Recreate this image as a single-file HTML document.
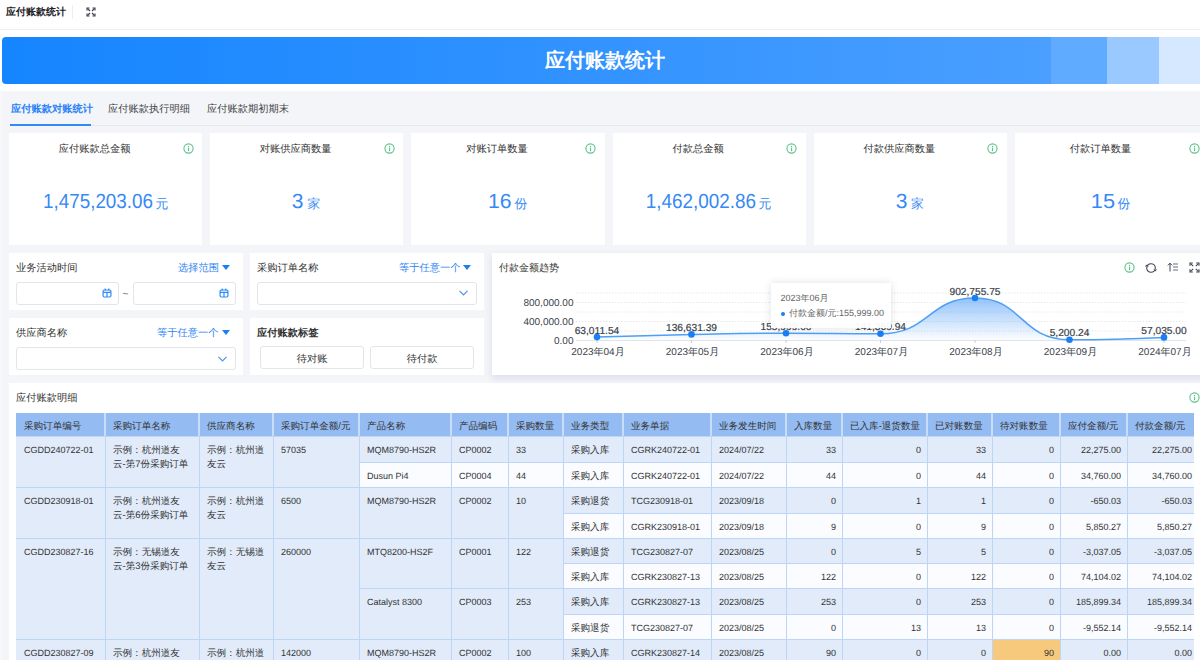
<!DOCTYPE html><html><head><meta charset="utf-8"><style>
*{box-sizing:border-box;margin:0;padding:0}
html,body{width:1200px;height:660px;overflow:hidden;background:#f3f5f9;font-family:"Liberation Sans", sans-serif;color:#333;text-rendering:geometricPrecision}
.a{position:absolute}
.t{position:absolute;white-space:nowrap;line-height:1}
.card{position:absolute;background:#fff}
.info{position:absolute;width:11px;height:11px}
.info svg{display:block}
.inp{position:absolute;background:#fff;border:1px solid #e3e5ea;border-radius:3px}
.btn{position:absolute;background:#fff;border:1px solid #e3e5ea;border-radius:3px;font-size:10.25px;color:#333;text-align:center;line-height:21px}
.cell{position:absolute;font-size:9.55px;color:#333;white-space:nowrap;overflow:hidden}
.lt{font-size:9px}
</style></head><body>
<div class="a" style="left:0;top:0;width:1200px;height:30px;background:#fff;border-bottom:1px solid #eceef2"></div>
<div class="t" style="margin-top:1.2px;left:6px;top:6.5px;font-size:10px;font-weight:bold;color:#1f2329">应付账款统计</div>
<div class="a" style="left:72px;top:4.5px;width:1px;height:14px;background:#eceef2"></div>
<svg class="a" style="left:85.5px;top:6.5px" width="10" height="10" viewBox="0 0 10 10" fill="none" stroke="#3a3f4a" stroke-width="1.1">
<path d="M1 3.5V1H3.5M6.5 1H9V3.5M9 6.5V9H6.5M3.5 9H1V6.5"/><path d="M1.5 1.5L4 4M8.5 1.5L6 4M8.5 8.5L6 6M1.5 8.5L4 6"/></svg>
<div class="a" style="left:0;top:30px;width:1200px;height:61px;background:#fff"></div>
<div class="a" style="left:2px;top:37px;width:1210px;height:47px;border-radius:4px;overflow:hidden;background:linear-gradient(90deg,#1585ff 0%,#3393ff 50%,#4a9fff 87%)"><div class="a" style="left:1049px;top:0;width:56px;height:47px;background:#5fabff"></div><div class="a" style="left:1105px;top:0;width:52px;height:47px;background:#99c9ff"></div><div class="a" style="left:1157px;top:0;width:60px;height:47px;background:#d6e8ff"></div></div>
<div class="t" style="margin-top:1.2px;left:545px;top:50px;font-size:20px;font-weight:bold;color:#fff;letter-spacing:0px">应付账款统计</div>
<div class="a" style="left:10px;top:125px;width:1190px;height:1px;background:#e4e7ed"></div><div class="a" style="left:0;top:91px;width:2px;height:569px;background:#f8f8fb"></div>
<div class="a" style="left:10px;top:124px;width:81px;height:2px;background:#3389f5"></div>
<div class="t" style="margin-top:1.2px;left:11px;top:104px;font-size:10.25px;color:#2b83f6;font-weight:bold">应付账款对账统计</div>
<div class="t" style="margin-top:1.2px;left:108px;top:104px;font-size:10.25px;color:#444">应付账款执行明细</div>
<div class="t" style="margin-top:1.2px;left:207px;top:104px;font-size:10.25px;color:#444">应付账款期初期末</div>
<div class="card" style="left:9.0px;top:133px;width:193.3px;height:112px"><div class="t" style="margin-top:1.2px;left:0;width:171px;top:10.5px;text-align:center;font-size:10.25px;color:#333">应付账款总金额</div><div class="info" style="left:173.5px;top:9.5px"><svg width="11" height="11" viewBox="0 0 11 11"><circle cx="5.5" cy="5.5" r="4.6" fill="none" stroke="#5cc489" stroke-width="1.1"/><rect x="5" y="2.9" width="1.1" height="1.1" fill="#5cc489"/><rect x="5" y="4.6" width="1.1" height="3.6" fill="#5cc489"/></svg></div></div>
<svg class="a" style="left:0;top:180px" width="1200" height="40"><text x="43" y="28" font-size="20.5" fill="#3589f5" textLength="110" lengthAdjust="spacingAndGlyphs" font-family="Liberation Sans">1,475,203.06</text><text x="155.5" y="27.6" font-size="12.8" fill="#3589f5">元</text></svg>
<div class="card" style="left:210.2px;top:133px;width:193.3px;height:112px"><div class="t" style="margin-top:1.2px;left:0;width:171px;top:10.5px;text-align:center;font-size:10.25px;color:#333">对账供应商数量</div><div class="info" style="left:173.5px;top:9.5px"><svg width="11" height="11" viewBox="0 0 11 11"><circle cx="5.5" cy="5.5" r="4.6" fill="none" stroke="#5cc489" stroke-width="1.1"/><rect x="5" y="2.9" width="1.1" height="1.1" fill="#5cc489"/><rect x="5" y="4.6" width="1.1" height="3.6" fill="#5cc489"/></svg></div></div>
<svg class="a" style="left:0;top:180px" width="1200" height="40"><text x="291.8" y="28" font-size="20.5" fill="#3589f5" textLength="11.699999999999989" lengthAdjust="spacingAndGlyphs" font-family="Liberation Sans">3</text><text x="307.5" y="27.6" font-size="12.8" fill="#3589f5">家</text></svg>
<div class="card" style="left:411.4px;top:133px;width:193.3px;height:112px"><div class="t" style="margin-top:1.2px;left:0;width:171px;top:10.5px;text-align:center;font-size:10.25px;color:#333">对账订单数量</div><div class="info" style="left:173.5px;top:9.5px"><svg width="11" height="11" viewBox="0 0 11 11"><circle cx="5.5" cy="5.5" r="4.6" fill="none" stroke="#5cc489" stroke-width="1.1"/><rect x="5" y="2.9" width="1.1" height="1.1" fill="#5cc489"/><rect x="5" y="4.6" width="1.1" height="3.6" fill="#5cc489"/></svg></div></div>
<svg class="a" style="left:0;top:180px" width="1200" height="40"><text x="488" y="28" font-size="20.5" fill="#3589f5" textLength="23.5" lengthAdjust="spacingAndGlyphs" font-family="Liberation Sans">16</text><text x="514.5" y="27.6" font-size="12.8" fill="#3589f5">份</text></svg>
<div class="card" style="left:612.5999999999999px;top:133px;width:193.3px;height:112px"><div class="t" style="margin-top:1.2px;left:0;width:171px;top:10.5px;text-align:center;font-size:10.25px;color:#333">付款总金额</div><div class="info" style="left:173.5px;top:9.5px"><svg width="11" height="11" viewBox="0 0 11 11"><circle cx="5.5" cy="5.5" r="4.6" fill="none" stroke="#5cc489" stroke-width="1.1"/><rect x="5" y="2.9" width="1.1" height="1.1" fill="#5cc489"/><rect x="5" y="4.6" width="1.1" height="3.6" fill="#5cc489"/></svg></div></div>
<svg class="a" style="left:0;top:180px" width="1200" height="40"><text x="645.8" y="28" font-size="20.5" fill="#3589f5" textLength="110.20000000000005" lengthAdjust="spacingAndGlyphs" font-family="Liberation Sans">1,462,002.86</text><text x="758.5" y="27.6" font-size="12.8" fill="#3589f5">元</text></svg>
<div class="card" style="left:813.8px;top:133px;width:193.3px;height:112px"><div class="t" style="margin-top:1.2px;left:0;width:171px;top:10.5px;text-align:center;font-size:10.25px;color:#333">付款供应商数量</div><div class="info" style="left:173.5px;top:9.5px"><svg width="11" height="11" viewBox="0 0 11 11"><circle cx="5.5" cy="5.5" r="4.6" fill="none" stroke="#5cc489" stroke-width="1.1"/><rect x="5" y="2.9" width="1.1" height="1.1" fill="#5cc489"/><rect x="5" y="4.6" width="1.1" height="3.6" fill="#5cc489"/></svg></div></div>
<svg class="a" style="left:0;top:180px" width="1200" height="40"><text x="895.8" y="28" font-size="20.5" fill="#3589f5" textLength="11.700000000000045" lengthAdjust="spacingAndGlyphs" font-family="Liberation Sans">3</text><text x="911" y="27.6" font-size="12.8" fill="#3589f5">家</text></svg>
<div class="card" style="left:1015.0px;top:133px;width:193.3px;height:112px"><div class="t" style="margin-top:1.2px;left:0;width:171px;top:10.5px;text-align:center;font-size:10.25px;color:#333">付款订单数量</div><div class="info" style="left:173.5px;top:9.5px"><svg width="11" height="11" viewBox="0 0 11 11"><circle cx="5.5" cy="5.5" r="4.6" fill="none" stroke="#5cc489" stroke-width="1.1"/><rect x="5" y="2.9" width="1.1" height="1.1" fill="#5cc489"/><rect x="5" y="4.6" width="1.1" height="3.6" fill="#5cc489"/></svg></div></div>
<svg class="a" style="left:0;top:180px" width="1200" height="40"><text x="1090.8" y="28" font-size="20.5" fill="#3589f5" textLength="24.200000000000045" lengthAdjust="spacingAndGlyphs" font-family="Liberation Sans">15</text><text x="1117.5" y="27.6" font-size="12.8" fill="#3589f5">份</text></svg>
<div class="card" style="left:9px;top:383px;width:1200px;height:300px"></div>
<div class="card" style="left:9px;top:253px;width:234px;height:57px;"></div>
<div class="card" style="left:9px;top:318px;width:234px;height:57px;"></div>
<div class="card" style="left:250px;top:253px;width:234px;height:57px;"></div>
<div class="card" style="left:250px;top:318px;width:234px;height:57px;"></div>
<div class="t" style="margin-top:1.2px;left:16px;top:262.7px;font-size:10.25px;color:#333">业务活动时间</div>
<div class="t" style="margin-top:1.2px;left:178px;top:262.7px;font-size:10.25px;color:#2f83f3">选择范围</div><div class="a" style="left:222px;top:265px;width:0;height:0;border-left:4px solid transparent;border-right:4px solid transparent;border-top:5px solid #1b7ef5"></div>
<div class="inp" style="left:16px;top:282px;width:103px;height:23px"></div><svg class="a" style="left:102px;top:288.2px" width="10" height="10" viewBox="0 0 10 10" fill="none" stroke="#2f8bf5" stroke-width="1.2"><rect x="1.1" y="2" width="7.8" height="7" rx="1.2"/><path d="M1 4.3H9M5 4.3V9M3.2 0.6V2.6M6.8 0.6V2.6"/></svg>
<div class="t" style="left:122.5px;top:290px;font-size:10px;color:#555">~</div>
<div class="inp" style="left:133px;top:282px;width:103px;height:23px"></div><svg class="a" style="left:219px;top:288.2px" width="10" height="10" viewBox="0 0 10 10" fill="none" stroke="#2f8bf5" stroke-width="1.2"><rect x="1.1" y="2" width="7.8" height="7" rx="1.2"/><path d="M1 4.3H9M5 4.3V9M3.2 0.6V2.6M6.8 0.6V2.6"/></svg>
<div class="t" style="margin-top:1.2px;left:16px;top:327.7px;font-size:10.25px;color:#333">供应商名称</div>
<div class="t" style="margin-top:1.2px;left:157px;top:327.7px;font-size:10.25px;color:#2f83f3">等于任意一个</div><div class="a" style="left:222px;top:330px;width:0;height:0;border-left:4px solid transparent;border-right:4px solid transparent;border-top:5px solid #1b7ef5"></div>
<div class="inp" style="left:16px;top:347px;width:220px;height:23px"></div><svg class="a" style="left:218px;top:356px" width="9" height="6" viewBox="0 0 9 6"><path d="M0.5 0.8L4.5 4.8L8.5 0.8" fill="none" stroke="#4a93f3" stroke-width="1.2"/></svg>
<div class="t" style="margin-top:1.2px;left:257px;top:262.7px;font-size:10.25px;color:#333">采购订单名称</div>
<div class="t" style="margin-top:1.2px;left:399px;top:262.7px;font-size:10.25px;color:#2f83f3">等于任意一个</div><div class="a" style="left:463px;top:265px;width:0;height:0;border-left:4px solid transparent;border-right:4px solid transparent;border-top:5px solid #1b7ef5"></div>
<div class="inp" style="left:257px;top:282px;width:220px;height:23px"></div><svg class="a" style="left:459px;top:290px" width="9" height="6" viewBox="0 0 9 6"><path d="M0.5 0.8L4.5 4.8L8.5 0.8" fill="none" stroke="#4a93f3" stroke-width="1.2"/></svg>
<div class="t" style="margin-top:1.2px;left:257px;top:327.7px;font-size:10.25px;color:#333;font-weight:bold">应付账款标签</div>
<div class="btn" style="padding-top:1.5px;left:260px;top:346px;width:104px;height:23px">待对账</div>
<div class="btn" style="padding-top:1.5px;left:370px;top:346px;width:104px;height:23px">待付款</div>
<div class="card" style="left:492px;top:253px;width:720px;height:122px;box-shadow:0 3px 7px rgba(60,50,140,0.13)"></div>
<div class="t" style="margin-top:1.2px;left:499px;top:263px;font-size:10px;color:#333">付款金额趋势</div>
<div class="info" style="left:1123.5px;top:261.8px"><svg width="11" height="11" viewBox="0 0 11 11"><circle cx="5.5" cy="5.5" r="4.6" fill="none" stroke="#5cc489" stroke-width="1.1"/><rect x="5" y="2.9" width="1.1" height="1.1" fill="#5cc489"/><rect x="5" y="4.6" width="1.1" height="3.6" fill="#5cc489"/></svg></div>
<svg class="a" style="left:1144.5px;top:261.5px" width="12" height="12" viewBox="0 0 12 12" fill="none" stroke="#3d4350" stroke-width="1.1"><circle cx="6" cy="6" r="4.3"/><path d="M0.6 4.6L1.7 2.9L3.0 4.6" stroke-width="1"/><path d="M9.0 7.4L10.3 9.1L11.4 7.4" stroke-width="1"/></svg>
<svg class="a" style="left:1166.5px;top:262px" width="12" height="10" viewBox="0 0 12 10" fill="none" stroke="#3d4350" stroke-width="1"><path d="M3 9.5V1.3M0.9 3.4L3 1.2L5.1 3.4"/><path d="M6 2H11M6 5H11M6 8H11" stroke="#6b7080" stroke-width="1.2"/></svg>
<svg class="a" style="left:1188.5px;top:261.5px" width="11" height="11" viewBox="0 0 11 11" fill="none" stroke="#3d4350" stroke-width="1.1"><path d="M1 3.8V1H3.8M7.2 1H10V3.8M10 7.2V10H7.2M3.8 10H1V7.2"/><path d="M1.6 1.6L4.2 4.2M9.4 1.6L6.8 4.2M9.4 9.4L6.8 6.8M1.6 9.4L4.2 6.8"/></svg>
<svg class="a" style="left:0;top:0" width="1200" height="660"><defs><linearGradient id="g" x1="0" y1="0" x2="0" y2="1"><stop offset="0" stop-color="#4d9cf7" stop-opacity="0.6"/><stop offset="1" stop-color="#4d9cf7" stop-opacity="0.02"/></linearGradient></defs><line x1="576" y1="293" x2="1186" y2="293" stroke="#e6e8ec" stroke-width="1" stroke-dasharray="1.4,1.6"/><line x1="576" y1="302.5" x2="1186" y2="302.5" stroke="#e6e8ec" stroke-width="1" stroke-dasharray="1.4,1.6"/><line x1="576" y1="312" x2="1186" y2="312" stroke="#e6e8ec" stroke-width="1" stroke-dasharray="1.4,1.6"/><line x1="576" y1="321.5" x2="1186" y2="321.5" stroke="#e6e8ec" stroke-width="1" stroke-dasharray="1.4,1.6"/><line x1="576" y1="331" x2="1186" y2="331" stroke="#e6e8ec" stroke-width="1" stroke-dasharray="1.4,1.6"/><line x1="576" y1="340.5" x2="1186" y2="340.5" stroke="#e0e3e8" stroke-width="1"/><path d="M597,337.1 C597.00,337.10 644.24,335.38 691.5,334.4 C738.74,333.43 738.75,333.20 786,333.2 C833.25,333.20 834.83,333.80 880.5,333.8 C929.33,333.80 928.28,298.00 975,298.0 C1022.78,298.00 1020.15,339.80 1069.5,339.8 C1114.65,339.80 1164.00,337.40 1164,337.4 L1164,340 L597,340 Z" fill="url(#g)"/><path d="M597,337.1 C597.00,337.10 644.24,335.38 691.5,334.4 C738.74,333.43 738.75,333.20 786,333.2 C833.25,333.20 834.83,333.80 880.5,333.8 C929.33,333.80 928.28,298.00 975,298.0 C1022.78,298.00 1020.15,339.80 1069.5,339.8 C1114.65,339.80 1164.00,337.40 1164,337.4" fill="none" stroke="#4d9ff7" stroke-width="1.5"/><line x1="597" y1="340" x2="597" y2="343" stroke="#ccc" stroke-width="1"/><line x1="691.5" y1="340" x2="691.5" y2="343" stroke="#ccc" stroke-width="1"/><line x1="786" y1="340" x2="786" y2="343" stroke="#ccc" stroke-width="1"/><line x1="880.5" y1="340" x2="880.5" y2="343" stroke="#ccc" stroke-width="1"/><line x1="975" y1="340" x2="975" y2="343" stroke="#ccc" stroke-width="1"/><line x1="1069.5" y1="340" x2="1069.5" y2="343" stroke="#ccc" stroke-width="1"/><line x1="1164" y1="340" x2="1164" y2="343" stroke="#ccc" stroke-width="1"/><circle cx="597" cy="337.1" r="3.3" fill="#1a7ff6"/><circle cx="691.5" cy="334.4" r="3.3" fill="#1a7ff6"/><circle cx="786" cy="333.2" r="3.3" fill="#1a7ff6"/><circle cx="880.5" cy="333.8" r="3.3" fill="#1a7ff6"/><circle cx="975" cy="298.0" r="3.3" fill="#1a7ff6"/><circle cx="1069.5" cy="339.8" r="3.3" fill="#1a7ff6"/><circle cx="1164" cy="337.4" r="3.3" fill="#1a7ff6"/></svg>
<div class="t" style="left:547px;width:100px;text-align:center;top:326.6px;font-size:10.2px;color:#3a3f4b;-webkit-text-stroke:0.2px #3a3f4b">63,011.54</div>
<div class="t" style="left:641.5px;width:100px;text-align:center;top:323.9px;font-size:10.2px;color:#3a3f4b;-webkit-text-stroke:0.2px #3a3f4b">136,631.39</div>
<div class="t" style="left:736px;width:100px;text-align:center;top:322.7px;font-size:10.2px;color:#3a3f4b;-webkit-text-stroke:0.2px #3a3f4b">155,999.00</div>
<div class="t" style="left:830.5px;width:100px;text-align:center;top:323.3px;font-size:10.2px;color:#3a3f4b;-webkit-text-stroke:0.2px #3a3f4b">141,369.94</div>
<div class="t" style="left:925px;width:100px;text-align:center;top:287.5px;font-size:10.2px;color:#3a3f4b;-webkit-text-stroke:0.2px #3a3f4b">902,755.75</div>
<div class="t" style="left:1019.5px;width:100px;text-align:center;top:329.3px;font-size:10.2px;color:#3a3f4b;-webkit-text-stroke:0.2px #3a3f4b">5,200.24</div>
<div class="t" style="left:1114px;width:100px;text-align:center;top:326.9px;font-size:10.2px;color:#3a3f4b;-webkit-text-stroke:0.2px #3a3f4b">57,035.00</div>
<div class="t" style="margin-top:1.2px;left:548px;width:100px;text-align:center;top:347px;font-size:10px;color:#3a3f4b">2023年04月</div>
<div class="t" style="margin-top:1.2px;left:642.5px;width:100px;text-align:center;top:347px;font-size:10px;color:#3a3f4b">2023年05月</div>
<div class="t" style="margin-top:1.2px;left:737px;width:100px;text-align:center;top:347px;font-size:10px;color:#3a3f4b">2023年06月</div>
<div class="t" style="margin-top:1.2px;left:831.5px;width:100px;text-align:center;top:347px;font-size:10px;color:#3a3f4b">2023年07月</div>
<div class="t" style="margin-top:1.2px;left:926px;width:100px;text-align:center;top:347px;font-size:10px;color:#3a3f4b">2023年08月</div>
<div class="t" style="margin-top:1.2px;left:1020.5px;width:100px;text-align:center;top:347px;font-size:10px;color:#3a3f4b">2023年09月</div>
<div class="t" style="margin-top:1.2px;left:1115px;width:100px;text-align:center;top:347px;font-size:10px;color:#3a3f4b">2024年07月</div>
<div class="t" style="left:473.5px;width:100px;text-align:right;top:298.5px;font-size:10px;color:#3a3f4b">800,000.00</div>
<div class="t" style="left:473.5px;width:100px;text-align:right;top:317.5px;font-size:10px;color:#3a3f4b">400,000.00</div>
<div class="t" style="left:473.5px;width:100px;text-align:right;top:336.5px;font-size:10px;color:#3a3f4b">0.00</div>
<div class="a" style="left:771px;top:283px;width:120px;height:45px;background:rgba(255,255,255,0.94);box-shadow:0 0 8px rgba(0,0,0,0.12)"></div>
<div class="t" style="left:780.5px;top:294px;font-size:9px;color:#666">2023年06月</div>
<div class="a" style="left:781px;top:311.5px;width:4px;height:4px;border-radius:50%;background:#1b7ef5"></div>
<div class="t" style="left:789px;top:309px;font-size:9px;color:#666">付款金额/元:155,999.00</div>
<div class="t" style="margin-top:1.2px;left:16px;top:393px;font-size:10.25px;color:#333">应付账款明细</div>
<div class="info" style="left:1188.5px;top:392px"><svg width="11" height="11" viewBox="0 0 11 11"><circle cx="5.5" cy="5.5" r="4.6" fill="none" stroke="#5cc489" stroke-width="1.1"/><rect x="5" y="2.9" width="1.1" height="1.1" fill="#5cc489"/><rect x="5" y="4.6" width="1.1" height="3.6" fill="#5cc489"/></svg></div>
<div class="a" style="left:16px;top:413px;width:1177.5px;height:23px;background:#94bbf2"></div>
<div class="cell" style="left:16px;top:413px;width:89px;height:23px;line-height:24px;padding-top:1.5px;padding-left:8px">采购订单编号</div>
<div class="cell" style="left:105px;top:413px;width:94px;height:23px;line-height:24px;padding-top:1.5px;padding-left:8px">采购订单名称</div>
<div class="a" style="left:104px;top:413px;width:2px;height:23px;background:#c9ddf8"></div>
<div class="cell" style="left:199px;top:413px;width:74px;height:23px;line-height:24px;padding-top:1.5px;padding-left:8px">供应商名称</div>
<div class="a" style="left:198px;top:413px;width:2px;height:23px;background:#c9ddf8"></div>
<div class="cell" style="left:273px;top:413px;width:86px;height:23px;line-height:24px;padding-top:1.5px;padding-left:8px">采购订单金额/元</div>
<div class="a" style="left:272px;top:413px;width:2px;height:23px;background:#c9ddf8"></div>
<div class="cell" style="left:359px;top:413px;width:92px;height:23px;line-height:24px;padding-top:1.5px;padding-left:8px">产品名称</div>
<div class="a" style="left:358px;top:413px;width:2px;height:23px;background:#c9ddf8"></div>
<div class="cell" style="left:451px;top:413px;width:57px;height:23px;line-height:24px;padding-top:1.5px;padding-left:8px">产品编码</div>
<div class="a" style="left:450px;top:413px;width:2px;height:23px;background:#c9ddf8"></div>
<div class="cell" style="left:508px;top:413px;width:55px;height:23px;line-height:24px;padding-top:1.5px;padding-left:8px">采购数量</div>
<div class="a" style="left:507px;top:413px;width:2px;height:23px;background:#c9ddf8"></div>
<div class="cell" style="left:563px;top:413px;width:60px;height:23px;line-height:24px;padding-top:1.5px;padding-left:8px">业务类型</div>
<div class="a" style="left:562px;top:413px;width:2px;height:23px;background:#c9ddf8"></div>
<div class="cell" style="left:623px;top:413px;width:88px;height:23px;line-height:24px;padding-top:1.5px;padding-left:8px">业务单据</div>
<div class="a" style="left:622px;top:413px;width:2px;height:23px;background:#c9ddf8"></div>
<div class="cell" style="left:711px;top:413px;width:75px;height:23px;line-height:24px;padding-top:1.5px;padding-left:8px">业务发生时间</div>
<div class="a" style="left:710px;top:413px;width:2px;height:23px;background:#c9ddf8"></div>
<div class="cell" style="left:786px;top:413px;width:56px;height:23px;line-height:24px;padding-top:1.5px;padding-left:8px">入库数量</div>
<div class="a" style="left:785px;top:413px;width:2px;height:23px;background:#c9ddf8"></div>
<div class="cell" style="left:842px;top:413px;width:85px;height:23px;line-height:24px;padding-top:1.5px;padding-left:8px">已入库-退货数量</div>
<div class="a" style="left:841px;top:413px;width:2px;height:23px;background:#c9ddf8"></div>
<div class="cell" style="left:927px;top:413px;width:65px;height:23px;line-height:24px;padding-top:1.5px;padding-left:8px">已对账数量</div>
<div class="a" style="left:926px;top:413px;width:2px;height:23px;background:#c9ddf8"></div>
<div class="cell" style="left:992px;top:413px;width:68px;height:23px;line-height:24px;padding-top:1.5px;padding-left:8px">待对账数量</div>
<div class="a" style="left:991px;top:413px;width:2px;height:23px;background:#c9ddf8"></div>
<div class="cell" style="left:1060px;top:413px;width:67px;height:23px;line-height:24px;padding-top:1.5px;padding-left:8px">应付金额/元</div>
<div class="a" style="left:1059px;top:413px;width:2px;height:23px;background:#c9ddf8"></div>
<div class="cell" style="left:1127px;top:413px;width:66.5px;height:23px;line-height:24px;padding-top:1.5px;padding-left:8px">付款金额/元</div>
<div class="a" style="left:1126px;top:413px;width:2px;height:23px;background:#c9ddf8"></div>
<div class="cell" style="left:16px;top:436px;width:89px;height:51px;background:#e1ebfa;border-left:0px solid #bdd5f6;border-top:1px solid #bdd5f6;padding-left:8px;padding-top:5.5px;line-height:14.2px"><span class="lt">CGDD240722-01</span></div>
<div class="cell" style="left:105px;top:436px;width:94px;height:51px;background:#e1ebfa;border-left:1px solid #bdd5f6;border-top:1px solid #bdd5f6;padding-left:7px;padding-top:6.7px;line-height:14.2px">示例：杭州道友<br>云-第7份采购订单</div>
<div class="cell" style="left:199px;top:436px;width:74px;height:51px;background:#e1ebfa;border-left:1px solid #bdd5f6;border-top:1px solid #bdd5f6;padding-left:7px;padding-top:6.7px;line-height:14.2px">示例：杭州道<br>友云</div>
<div class="cell" style="left:273px;top:436px;width:86px;height:51px;background:#e1ebfa;border-left:1px solid #bdd5f6;border-top:1px solid #bdd5f6;padding-left:7px;padding-top:5.5px;line-height:14.2px"><span class="lt">57035</span></div>
<div class="cell" style="left:359px;top:436px;width:92px;height:26px;background:#e1ebfa;border-left:1px solid #bdd5f6;border-top:1px solid #bdd5f6;padding-left:7px;padding-top:5.5px;line-height:14.2px"><span class="lt">MQM8790-HS2R</span></div>
<div class="cell" style="left:451px;top:436px;width:57px;height:26px;background:#e1ebfa;border-left:1px solid #bdd5f6;border-top:1px solid #bdd5f6;padding-left:7px;padding-top:5.5px;line-height:14.2px"><span class="lt">CP0002</span></div>
<div class="cell" style="left:508px;top:436px;width:55px;height:26px;background:#e1ebfa;border-left:1px solid #bdd5f6;border-top:1px solid #bdd5f6;padding-left:7px;padding-top:5.5px;line-height:14.2px"><span class="lt">33</span></div>
<div class="cell" style="left:359px;top:462px;width:92px;height:25px;background:#fafcff;border-left:1px solid #bdd5f6;border-top:1px solid #bdd5f6;padding-left:7px;padding-top:5.5px;line-height:14.2px"><span class="lt">Dusun Pi4</span></div>
<div class="cell" style="left:451px;top:462px;width:57px;height:25px;background:#fafcff;border-left:1px solid #bdd5f6;border-top:1px solid #bdd5f6;padding-left:7px;padding-top:5.5px;line-height:14.2px"><span class="lt">CP0004</span></div>
<div class="cell" style="left:508px;top:462px;width:55px;height:25px;background:#fafcff;border-left:1px solid #bdd5f6;border-top:1px solid #bdd5f6;padding-left:7px;padding-top:5.5px;line-height:14.2px"><span class="lt">44</span></div>
<div class="cell" style="left:16px;top:487px;width:89px;height:51px;background:#e1ebfa;border-left:0px solid #bdd5f6;border-top:1px solid #bdd5f6;padding-left:8px;padding-top:5.5px;line-height:14.2px"><span class="lt">CGDD230918-01</span></div>
<div class="cell" style="left:105px;top:487px;width:94px;height:51px;background:#e1ebfa;border-left:1px solid #bdd5f6;border-top:1px solid #bdd5f6;padding-left:7px;padding-top:6.7px;line-height:14.2px">示例：杭州道友<br>云-第6份采购订单</div>
<div class="cell" style="left:199px;top:487px;width:74px;height:51px;background:#e1ebfa;border-left:1px solid #bdd5f6;border-top:1px solid #bdd5f6;padding-left:7px;padding-top:6.7px;line-height:14.2px">示例：杭州道<br>友云</div>
<div class="cell" style="left:273px;top:487px;width:86px;height:51px;background:#e1ebfa;border-left:1px solid #bdd5f6;border-top:1px solid #bdd5f6;padding-left:7px;padding-top:5.5px;line-height:14.2px"><span class="lt">6500</span></div>
<div class="cell" style="left:359px;top:487px;width:92px;height:51px;background:#e1ebfa;border-left:1px solid #bdd5f6;border-top:1px solid #bdd5f6;padding-left:7px;padding-top:5.5px;line-height:14.2px"><span class="lt">MQM8790-HS2R</span></div>
<div class="cell" style="left:451px;top:487px;width:57px;height:51px;background:#e1ebfa;border-left:1px solid #bdd5f6;border-top:1px solid #bdd5f6;padding-left:7px;padding-top:5.5px;line-height:14.2px"><span class="lt">CP0002</span></div>
<div class="cell" style="left:508px;top:487px;width:55px;height:51px;background:#e1ebfa;border-left:1px solid #bdd5f6;border-top:1px solid #bdd5f6;padding-left:7px;padding-top:5.5px;line-height:14.2px"><span class="lt">10</span></div>
<div class="cell" style="left:16px;top:538px;width:89px;height:101px;background:#e1ebfa;border-left:0px solid #bdd5f6;border-top:1px solid #bdd5f6;padding-left:8px;padding-top:5.5px;line-height:14.2px"><span class="lt">CGDD230827-16</span></div>
<div class="cell" style="left:105px;top:538px;width:94px;height:101px;background:#e1ebfa;border-left:1px solid #bdd5f6;border-top:1px solid #bdd5f6;padding-left:7px;padding-top:6.7px;line-height:14.2px">示例：无锡道友<br>云-第3份采购订单</div>
<div class="cell" style="left:199px;top:538px;width:74px;height:101px;background:#e1ebfa;border-left:1px solid #bdd5f6;border-top:1px solid #bdd5f6;padding-left:7px;padding-top:6.7px;line-height:14.2px">示例：无锡道<br>友云</div>
<div class="cell" style="left:273px;top:538px;width:86px;height:101px;background:#e1ebfa;border-left:1px solid #bdd5f6;border-top:1px solid #bdd5f6;padding-left:7px;padding-top:5.5px;line-height:14.2px"><span class="lt">260000</span></div>
<div class="cell" style="left:359px;top:538px;width:92px;height:50px;background:#e1ebfa;border-left:1px solid #bdd5f6;border-top:1px solid #bdd5f6;padding-left:7px;padding-top:5.5px;line-height:14.2px"><span class="lt">MTQ8200-HS2F</span></div>
<div class="cell" style="left:451px;top:538px;width:57px;height:50px;background:#e1ebfa;border-left:1px solid #bdd5f6;border-top:1px solid #bdd5f6;padding-left:7px;padding-top:5.5px;line-height:14.2px"><span class="lt">CP0001</span></div>
<div class="cell" style="left:508px;top:538px;width:55px;height:50px;background:#e1ebfa;border-left:1px solid #bdd5f6;border-top:1px solid #bdd5f6;padding-left:7px;padding-top:5.5px;line-height:14.2px"><span class="lt">122</span></div>
<div class="cell" style="left:359px;top:588px;width:92px;height:51px;background:#e1ebfa;border-left:1px solid #bdd5f6;border-top:1px solid #bdd5f6;padding-left:7px;padding-top:5.5px;line-height:14.2px"><span class="lt">Catalyst 8300</span></div>
<div class="cell" style="left:451px;top:588px;width:57px;height:51px;background:#e1ebfa;border-left:1px solid #bdd5f6;border-top:1px solid #bdd5f6;padding-left:7px;padding-top:5.5px;line-height:14.2px"><span class="lt">CP0003</span></div>
<div class="cell" style="left:508px;top:588px;width:55px;height:51px;background:#e1ebfa;border-left:1px solid #bdd5f6;border-top:1px solid #bdd5f6;padding-left:7px;padding-top:5.5px;line-height:14.2px"><span class="lt">253</span></div>
<div class="cell" style="left:16px;top:639px;width:89px;height:51px;background:#e1ebfa;border-left:0px solid #bdd5f6;border-top:1px solid #bdd5f6;padding-left:8px;padding-top:5.5px;line-height:14.2px"><span class="lt">CGDD230827-09</span></div>
<div class="cell" style="left:105px;top:639px;width:94px;height:51px;background:#e1ebfa;border-left:1px solid #bdd5f6;border-top:1px solid #bdd5f6;padding-left:7px;padding-top:6.7px;line-height:14.2px">示例：杭州道友</div>
<div class="cell" style="left:199px;top:639px;width:74px;height:51px;background:#e1ebfa;border-left:1px solid #bdd5f6;border-top:1px solid #bdd5f6;padding-left:7px;padding-top:6.7px;line-height:14.2px">示例：杭州道</div>
<div class="cell" style="left:273px;top:639px;width:86px;height:51px;background:#e1ebfa;border-left:1px solid #bdd5f6;border-top:1px solid #bdd5f6;padding-left:7px;padding-top:5.5px;line-height:14.2px"><span class="lt">142000</span></div>
<div class="cell" style="left:359px;top:639px;width:92px;height:51px;background:#e1ebfa;border-left:1px solid #bdd5f6;border-top:1px solid #bdd5f6;padding-left:7px;padding-top:5.5px;line-height:14.2px"><span class="lt">MQM8790-HS2R</span></div>
<div class="cell" style="left:451px;top:639px;width:57px;height:51px;background:#e1ebfa;border-left:1px solid #bdd5f6;border-top:1px solid #bdd5f6;padding-left:7px;padding-top:5.5px;line-height:14.2px"><span class="lt">CP0002</span></div>
<div class="cell" style="left:508px;top:639px;width:55px;height:51px;background:#e1ebfa;border-left:1px solid #bdd5f6;border-top:1px solid #bdd5f6;padding-left:7px;padding-top:5.5px;line-height:14.2px"><span class="lt">100</span></div>
<div class="cell" style="left:563px;top:436px;width:60px;height:26px;background:#e1ebfa;border-left:1px solid #bdd5f6;border-top:1px solid #bdd5f6;padding-left:7px;padding-top:6.7px;line-height:14.2px">采购入库</div>
<div class="cell" style="left:623px;top:436px;width:88px;height:26px;background:#e1ebfa;border-left:1px solid #bdd5f6;border-top:1px solid #bdd5f6;padding-left:7px;padding-top:5.5px;line-height:14.2px"><span class="lt">CGRK240722-01</span></div>
<div class="cell" style="left:711px;top:436px;width:75px;height:26px;background:#e1ebfa;border-left:1px solid #bdd5f6;border-top:1px solid #bdd5f6;padding-left:7px;padding-top:5.5px;line-height:14.2px"><span class="lt">2024/07/22</span></div>
<div class="cell" style="left:786px;top:436px;width:56px;height:26px;background:#e1ebfa;border-left:1px solid #bdd5f6;border-top:1px solid #bdd5f6;padding-right:6px;text-align:right;padding-top:5.5px;line-height:14.2px"><span class="lt">33</span></div>
<div class="cell" style="left:842px;top:436px;width:85px;height:26px;background:#e1ebfa;border-left:1px solid #bdd5f6;border-top:1px solid #bdd5f6;padding-right:6px;text-align:right;padding-top:5.5px;line-height:14.2px"><span class="lt">0</span></div>
<div class="cell" style="left:927px;top:436px;width:65px;height:26px;background:#e1ebfa;border-left:1px solid #bdd5f6;border-top:1px solid #bdd5f6;padding-right:6px;text-align:right;padding-top:5.5px;line-height:14.2px"><span class="lt">33</span></div>
<div class="cell" style="left:992px;top:436px;width:68px;height:26px;background:#e1ebfa;border-left:1px solid #bdd5f6;border-top:1px solid #bdd5f6;padding-right:6px;text-align:right;padding-top:5.5px;line-height:14.2px"><span class="lt">0</span></div>
<div class="cell" style="left:1060px;top:436px;width:67px;height:26px;background:#e1ebfa;border-left:1px solid #bdd5f6;border-top:1px solid #bdd5f6;padding-right:6px;text-align:right;padding-top:5.5px;line-height:14.2px"><span class="lt">22,275.00</span></div>
<div class="cell" style="left:1127px;top:436px;width:66.5px;height:26px;background:#e1ebfa;border-left:1px solid #bdd5f6;border-top:1px solid #bdd5f6;padding-right:1.5px;text-align:right;padding-top:5.5px;line-height:14.2px"><span class="lt">22,275.00</span></div>
<div class="cell" style="left:563px;top:462px;width:60px;height:25px;background:#fafcff;border-left:1px solid #bdd5f6;border-top:1px solid #bdd5f6;padding-left:7px;padding-top:6.7px;line-height:14.2px">采购入库</div>
<div class="cell" style="left:623px;top:462px;width:88px;height:25px;background:#fafcff;border-left:1px solid #bdd5f6;border-top:1px solid #bdd5f6;padding-left:7px;padding-top:5.5px;line-height:14.2px"><span class="lt">CGRK240722-01</span></div>
<div class="cell" style="left:711px;top:462px;width:75px;height:25px;background:#fafcff;border-left:1px solid #bdd5f6;border-top:1px solid #bdd5f6;padding-left:7px;padding-top:5.5px;line-height:14.2px"><span class="lt">2024/07/22</span></div>
<div class="cell" style="left:786px;top:462px;width:56px;height:25px;background:#fafcff;border-left:1px solid #bdd5f6;border-top:1px solid #bdd5f6;padding-right:6px;text-align:right;padding-top:5.5px;line-height:14.2px"><span class="lt">44</span></div>
<div class="cell" style="left:842px;top:462px;width:85px;height:25px;background:#fafcff;border-left:1px solid #bdd5f6;border-top:1px solid #bdd5f6;padding-right:6px;text-align:right;padding-top:5.5px;line-height:14.2px"><span class="lt">0</span></div>
<div class="cell" style="left:927px;top:462px;width:65px;height:25px;background:#fafcff;border-left:1px solid #bdd5f6;border-top:1px solid #bdd5f6;padding-right:6px;text-align:right;padding-top:5.5px;line-height:14.2px"><span class="lt">44</span></div>
<div class="cell" style="left:992px;top:462px;width:68px;height:25px;background:#fafcff;border-left:1px solid #bdd5f6;border-top:1px solid #bdd5f6;padding-right:6px;text-align:right;padding-top:5.5px;line-height:14.2px"><span class="lt">0</span></div>
<div class="cell" style="left:1060px;top:462px;width:67px;height:25px;background:#fafcff;border-left:1px solid #bdd5f6;border-top:1px solid #bdd5f6;padding-right:6px;text-align:right;padding-top:5.5px;line-height:14.2px"><span class="lt">34,760.00</span></div>
<div class="cell" style="left:1127px;top:462px;width:66.5px;height:25px;background:#fafcff;border-left:1px solid #bdd5f6;border-top:1px solid #bdd5f6;padding-right:1.5px;text-align:right;padding-top:5.5px;line-height:14.2px"><span class="lt">34,760.00</span></div>
<div class="cell" style="left:563px;top:487px;width:60px;height:26px;background:#e1ebfa;border-left:1px solid #bdd5f6;border-top:1px solid #bdd5f6;padding-left:7px;padding-top:6.7px;line-height:14.2px">采购退货</div>
<div class="cell" style="left:623px;top:487px;width:88px;height:26px;background:#e1ebfa;border-left:1px solid #bdd5f6;border-top:1px solid #bdd5f6;padding-left:7px;padding-top:5.5px;line-height:14.2px"><span class="lt">TCG230918-01</span></div>
<div class="cell" style="left:711px;top:487px;width:75px;height:26px;background:#e1ebfa;border-left:1px solid #bdd5f6;border-top:1px solid #bdd5f6;padding-left:7px;padding-top:5.5px;line-height:14.2px"><span class="lt">2023/09/18</span></div>
<div class="cell" style="left:786px;top:487px;width:56px;height:26px;background:#e1ebfa;border-left:1px solid #bdd5f6;border-top:1px solid #bdd5f6;padding-right:6px;text-align:right;padding-top:5.5px;line-height:14.2px"><span class="lt">0</span></div>
<div class="cell" style="left:842px;top:487px;width:85px;height:26px;background:#e1ebfa;border-left:1px solid #bdd5f6;border-top:1px solid #bdd5f6;padding-right:6px;text-align:right;padding-top:5.5px;line-height:14.2px"><span class="lt">1</span></div>
<div class="cell" style="left:927px;top:487px;width:65px;height:26px;background:#e1ebfa;border-left:1px solid #bdd5f6;border-top:1px solid #bdd5f6;padding-right:6px;text-align:right;padding-top:5.5px;line-height:14.2px"><span class="lt">1</span></div>
<div class="cell" style="left:992px;top:487px;width:68px;height:26px;background:#e1ebfa;border-left:1px solid #bdd5f6;border-top:1px solid #bdd5f6;padding-right:6px;text-align:right;padding-top:5.5px;line-height:14.2px"><span class="lt">0</span></div>
<div class="cell" style="left:1060px;top:487px;width:67px;height:26px;background:#e1ebfa;border-left:1px solid #bdd5f6;border-top:1px solid #bdd5f6;padding-right:6px;text-align:right;padding-top:5.5px;line-height:14.2px"><span class="lt">-650.03</span></div>
<div class="cell" style="left:1127px;top:487px;width:66.5px;height:26px;background:#e1ebfa;border-left:1px solid #bdd5f6;border-top:1px solid #bdd5f6;padding-right:1.5px;text-align:right;padding-top:5.5px;line-height:14.2px"><span class="lt">-650.03</span></div>
<div class="cell" style="left:563px;top:513px;width:60px;height:25px;background:#fafcff;border-left:1px solid #bdd5f6;border-top:1px solid #bdd5f6;padding-left:7px;padding-top:6.7px;line-height:14.2px">采购入库</div>
<div class="cell" style="left:623px;top:513px;width:88px;height:25px;background:#fafcff;border-left:1px solid #bdd5f6;border-top:1px solid #bdd5f6;padding-left:7px;padding-top:5.5px;line-height:14.2px"><span class="lt">CGRK230918-01</span></div>
<div class="cell" style="left:711px;top:513px;width:75px;height:25px;background:#fafcff;border-left:1px solid #bdd5f6;border-top:1px solid #bdd5f6;padding-left:7px;padding-top:5.5px;line-height:14.2px"><span class="lt">2023/09/18</span></div>
<div class="cell" style="left:786px;top:513px;width:56px;height:25px;background:#fafcff;border-left:1px solid #bdd5f6;border-top:1px solid #bdd5f6;padding-right:6px;text-align:right;padding-top:5.5px;line-height:14.2px"><span class="lt">9</span></div>
<div class="cell" style="left:842px;top:513px;width:85px;height:25px;background:#fafcff;border-left:1px solid #bdd5f6;border-top:1px solid #bdd5f6;padding-right:6px;text-align:right;padding-top:5.5px;line-height:14.2px"><span class="lt">0</span></div>
<div class="cell" style="left:927px;top:513px;width:65px;height:25px;background:#fafcff;border-left:1px solid #bdd5f6;border-top:1px solid #bdd5f6;padding-right:6px;text-align:right;padding-top:5.5px;line-height:14.2px"><span class="lt">9</span></div>
<div class="cell" style="left:992px;top:513px;width:68px;height:25px;background:#fafcff;border-left:1px solid #bdd5f6;border-top:1px solid #bdd5f6;padding-right:6px;text-align:right;padding-top:5.5px;line-height:14.2px"><span class="lt">0</span></div>
<div class="cell" style="left:1060px;top:513px;width:67px;height:25px;background:#fafcff;border-left:1px solid #bdd5f6;border-top:1px solid #bdd5f6;padding-right:6px;text-align:right;padding-top:5.5px;line-height:14.2px"><span class="lt">5,850.27</span></div>
<div class="cell" style="left:1127px;top:513px;width:66.5px;height:25px;background:#fafcff;border-left:1px solid #bdd5f6;border-top:1px solid #bdd5f6;padding-right:1.5px;text-align:right;padding-top:5.5px;line-height:14.2px"><span class="lt">5,850.27</span></div>
<div class="cell" style="left:563px;top:538px;width:60px;height:25px;background:#e1ebfa;border-left:1px solid #bdd5f6;border-top:1px solid #bdd5f6;padding-left:7px;padding-top:6.7px;line-height:14.2px">采购退货</div>
<div class="cell" style="left:623px;top:538px;width:88px;height:25px;background:#e1ebfa;border-left:1px solid #bdd5f6;border-top:1px solid #bdd5f6;padding-left:7px;padding-top:5.5px;line-height:14.2px"><span class="lt">TCG230827-07</span></div>
<div class="cell" style="left:711px;top:538px;width:75px;height:25px;background:#e1ebfa;border-left:1px solid #bdd5f6;border-top:1px solid #bdd5f6;padding-left:7px;padding-top:5.5px;line-height:14.2px"><span class="lt">2023/08/25</span></div>
<div class="cell" style="left:786px;top:538px;width:56px;height:25px;background:#e1ebfa;border-left:1px solid #bdd5f6;border-top:1px solid #bdd5f6;padding-right:6px;text-align:right;padding-top:5.5px;line-height:14.2px"><span class="lt">0</span></div>
<div class="cell" style="left:842px;top:538px;width:85px;height:25px;background:#e1ebfa;border-left:1px solid #bdd5f6;border-top:1px solid #bdd5f6;padding-right:6px;text-align:right;padding-top:5.5px;line-height:14.2px"><span class="lt">5</span></div>
<div class="cell" style="left:927px;top:538px;width:65px;height:25px;background:#e1ebfa;border-left:1px solid #bdd5f6;border-top:1px solid #bdd5f6;padding-right:6px;text-align:right;padding-top:5.5px;line-height:14.2px"><span class="lt">5</span></div>
<div class="cell" style="left:992px;top:538px;width:68px;height:25px;background:#e1ebfa;border-left:1px solid #bdd5f6;border-top:1px solid #bdd5f6;padding-right:6px;text-align:right;padding-top:5.5px;line-height:14.2px"><span class="lt">0</span></div>
<div class="cell" style="left:1060px;top:538px;width:67px;height:25px;background:#e1ebfa;border-left:1px solid #bdd5f6;border-top:1px solid #bdd5f6;padding-right:6px;text-align:right;padding-top:5.5px;line-height:14.2px"><span class="lt">-3,037.05</span></div>
<div class="cell" style="left:1127px;top:538px;width:66.5px;height:25px;background:#e1ebfa;border-left:1px solid #bdd5f6;border-top:1px solid #bdd5f6;padding-right:1.5px;text-align:right;padding-top:5.5px;line-height:14.2px"><span class="lt">-3,037.05</span></div>
<div class="cell" style="left:563px;top:563px;width:60px;height:25px;background:#fafcff;border-left:1px solid #bdd5f6;border-top:1px solid #bdd5f6;padding-left:7px;padding-top:6.7px;line-height:14.2px">采购入库</div>
<div class="cell" style="left:623px;top:563px;width:88px;height:25px;background:#fafcff;border-left:1px solid #bdd5f6;border-top:1px solid #bdd5f6;padding-left:7px;padding-top:5.5px;line-height:14.2px"><span class="lt">CGRK230827-13</span></div>
<div class="cell" style="left:711px;top:563px;width:75px;height:25px;background:#fafcff;border-left:1px solid #bdd5f6;border-top:1px solid #bdd5f6;padding-left:7px;padding-top:5.5px;line-height:14.2px"><span class="lt">2023/08/25</span></div>
<div class="cell" style="left:786px;top:563px;width:56px;height:25px;background:#fafcff;border-left:1px solid #bdd5f6;border-top:1px solid #bdd5f6;padding-right:6px;text-align:right;padding-top:5.5px;line-height:14.2px"><span class="lt">122</span></div>
<div class="cell" style="left:842px;top:563px;width:85px;height:25px;background:#fafcff;border-left:1px solid #bdd5f6;border-top:1px solid #bdd5f6;padding-right:6px;text-align:right;padding-top:5.5px;line-height:14.2px"><span class="lt">0</span></div>
<div class="cell" style="left:927px;top:563px;width:65px;height:25px;background:#fafcff;border-left:1px solid #bdd5f6;border-top:1px solid #bdd5f6;padding-right:6px;text-align:right;padding-top:5.5px;line-height:14.2px"><span class="lt">122</span></div>
<div class="cell" style="left:992px;top:563px;width:68px;height:25px;background:#fafcff;border-left:1px solid #bdd5f6;border-top:1px solid #bdd5f6;padding-right:6px;text-align:right;padding-top:5.5px;line-height:14.2px"><span class="lt">0</span></div>
<div class="cell" style="left:1060px;top:563px;width:67px;height:25px;background:#fafcff;border-left:1px solid #bdd5f6;border-top:1px solid #bdd5f6;padding-right:6px;text-align:right;padding-top:5.5px;line-height:14.2px"><span class="lt">74,104.02</span></div>
<div class="cell" style="left:1127px;top:563px;width:66.5px;height:25px;background:#fafcff;border-left:1px solid #bdd5f6;border-top:1px solid #bdd5f6;padding-right:1.5px;text-align:right;padding-top:5.5px;line-height:14.2px"><span class="lt">74,104.02</span></div>
<div class="cell" style="left:563px;top:588px;width:60px;height:26px;background:#e1ebfa;border-left:1px solid #bdd5f6;border-top:1px solid #bdd5f6;padding-left:7px;padding-top:6.7px;line-height:14.2px">采购入库</div>
<div class="cell" style="left:623px;top:588px;width:88px;height:26px;background:#e1ebfa;border-left:1px solid #bdd5f6;border-top:1px solid #bdd5f6;padding-left:7px;padding-top:5.5px;line-height:14.2px"><span class="lt">CGRK230827-13</span></div>
<div class="cell" style="left:711px;top:588px;width:75px;height:26px;background:#e1ebfa;border-left:1px solid #bdd5f6;border-top:1px solid #bdd5f6;padding-left:7px;padding-top:5.5px;line-height:14.2px"><span class="lt">2023/08/25</span></div>
<div class="cell" style="left:786px;top:588px;width:56px;height:26px;background:#e1ebfa;border-left:1px solid #bdd5f6;border-top:1px solid #bdd5f6;padding-right:6px;text-align:right;padding-top:5.5px;line-height:14.2px"><span class="lt">253</span></div>
<div class="cell" style="left:842px;top:588px;width:85px;height:26px;background:#e1ebfa;border-left:1px solid #bdd5f6;border-top:1px solid #bdd5f6;padding-right:6px;text-align:right;padding-top:5.5px;line-height:14.2px"><span class="lt">0</span></div>
<div class="cell" style="left:927px;top:588px;width:65px;height:26px;background:#e1ebfa;border-left:1px solid #bdd5f6;border-top:1px solid #bdd5f6;padding-right:6px;text-align:right;padding-top:5.5px;line-height:14.2px"><span class="lt">253</span></div>
<div class="cell" style="left:992px;top:588px;width:68px;height:26px;background:#e1ebfa;border-left:1px solid #bdd5f6;border-top:1px solid #bdd5f6;padding-right:6px;text-align:right;padding-top:5.5px;line-height:14.2px"><span class="lt">0</span></div>
<div class="cell" style="left:1060px;top:588px;width:67px;height:26px;background:#e1ebfa;border-left:1px solid #bdd5f6;border-top:1px solid #bdd5f6;padding-right:6px;text-align:right;padding-top:5.5px;line-height:14.2px"><span class="lt">185,899.34</span></div>
<div class="cell" style="left:1127px;top:588px;width:66.5px;height:26px;background:#e1ebfa;border-left:1px solid #bdd5f6;border-top:1px solid #bdd5f6;padding-right:1.5px;text-align:right;padding-top:5.5px;line-height:14.2px"><span class="lt">185,899.34</span></div>
<div class="cell" style="left:563px;top:614px;width:60px;height:25px;background:#fafcff;border-left:1px solid #bdd5f6;border-top:1px solid #bdd5f6;padding-left:7px;padding-top:6.7px;line-height:14.2px">采购退货</div>
<div class="cell" style="left:623px;top:614px;width:88px;height:25px;background:#fafcff;border-left:1px solid #bdd5f6;border-top:1px solid #bdd5f6;padding-left:7px;padding-top:5.5px;line-height:14.2px"><span class="lt">TCG230827-07</span></div>
<div class="cell" style="left:711px;top:614px;width:75px;height:25px;background:#fafcff;border-left:1px solid #bdd5f6;border-top:1px solid #bdd5f6;padding-left:7px;padding-top:5.5px;line-height:14.2px"><span class="lt">2023/08/25</span></div>
<div class="cell" style="left:786px;top:614px;width:56px;height:25px;background:#fafcff;border-left:1px solid #bdd5f6;border-top:1px solid #bdd5f6;padding-right:6px;text-align:right;padding-top:5.5px;line-height:14.2px"><span class="lt">0</span></div>
<div class="cell" style="left:842px;top:614px;width:85px;height:25px;background:#fafcff;border-left:1px solid #bdd5f6;border-top:1px solid #bdd5f6;padding-right:6px;text-align:right;padding-top:5.5px;line-height:14.2px"><span class="lt">13</span></div>
<div class="cell" style="left:927px;top:614px;width:65px;height:25px;background:#fafcff;border-left:1px solid #bdd5f6;border-top:1px solid #bdd5f6;padding-right:6px;text-align:right;padding-top:5.5px;line-height:14.2px"><span class="lt">13</span></div>
<div class="cell" style="left:992px;top:614px;width:68px;height:25px;background:#fafcff;border-left:1px solid #bdd5f6;border-top:1px solid #bdd5f6;padding-right:6px;text-align:right;padding-top:5.5px;line-height:14.2px"><span class="lt">0</span></div>
<div class="cell" style="left:1060px;top:614px;width:67px;height:25px;background:#fafcff;border-left:1px solid #bdd5f6;border-top:1px solid #bdd5f6;padding-right:6px;text-align:right;padding-top:5.5px;line-height:14.2px"><span class="lt">-9,552.14</span></div>
<div class="cell" style="left:1127px;top:614px;width:66.5px;height:25px;background:#fafcff;border-left:1px solid #bdd5f6;border-top:1px solid #bdd5f6;padding-right:1.5px;text-align:right;padding-top:5.5px;line-height:14.2px"><span class="lt">-9,552.14</span></div>
<div class="cell" style="left:563px;top:639px;width:60px;height:25px;background:#e1ebfa;border-left:1px solid #bdd5f6;border-top:1px solid #bdd5f6;padding-left:7px;padding-top:6.7px;line-height:14.2px">采购入库</div>
<div class="cell" style="left:623px;top:639px;width:88px;height:25px;background:#e1ebfa;border-left:1px solid #bdd5f6;border-top:1px solid #bdd5f6;padding-left:7px;padding-top:5.5px;line-height:14.2px"><span class="lt">CGRK230827-14</span></div>
<div class="cell" style="left:711px;top:639px;width:75px;height:25px;background:#e1ebfa;border-left:1px solid #bdd5f6;border-top:1px solid #bdd5f6;padding-left:7px;padding-top:5.5px;line-height:14.2px"><span class="lt">2023/08/25</span></div>
<div class="cell" style="left:786px;top:639px;width:56px;height:25px;background:#e1ebfa;border-left:1px solid #bdd5f6;border-top:1px solid #bdd5f6;padding-right:6px;text-align:right;padding-top:5.5px;line-height:14.2px"><span class="lt">90</span></div>
<div class="cell" style="left:842px;top:639px;width:85px;height:25px;background:#e1ebfa;border-left:1px solid #bdd5f6;border-top:1px solid #bdd5f6;padding-right:6px;text-align:right;padding-top:5.5px;line-height:14.2px"><span class="lt">0</span></div>
<div class="cell" style="left:927px;top:639px;width:65px;height:25px;background:#e1ebfa;border-left:1px solid #bdd5f6;border-top:1px solid #bdd5f6;padding-right:6px;text-align:right;padding-top:5.5px;line-height:14.2px"><span class="lt">0</span></div>
<div class="cell" style="left:992px;top:639px;width:68px;height:25px;background:#f7c97d;border-left:1px solid #bdd5f6;border-top:1px solid #bdd5f6;padding-right:6px;text-align:right;padding-top:5.5px;line-height:14.2px"><span class="lt">90</span></div>
<div class="cell" style="left:1060px;top:639px;width:67px;height:25px;background:#e1ebfa;border-left:1px solid #bdd5f6;border-top:1px solid #bdd5f6;padding-right:6px;text-align:right;padding-top:5.5px;line-height:14.2px"><span class="lt">0.00</span></div>
<div class="cell" style="left:1127px;top:639px;width:66.5px;height:25px;background:#e1ebfa;border-left:1px solid #bdd5f6;border-top:1px solid #bdd5f6;padding-right:1.5px;text-align:right;padding-top:5.5px;line-height:14.2px"><span class="lt">0.00</span></div>
</body></html>
